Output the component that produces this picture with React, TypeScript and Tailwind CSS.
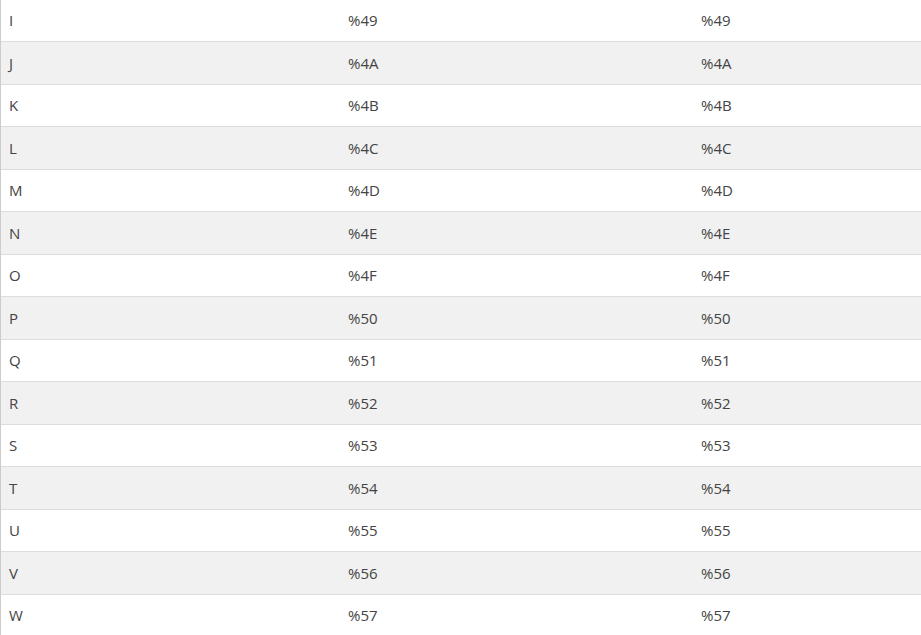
const rows: [string, string][] = [
  ['I', '%49'],
  ['J', '%4A'],
  ['K', '%4B'],
  ['L', '%4C'],
  ['M', '%4D'],
  ['N', '%4E'],
  ['O', '%4F'],
  ['P', '%50'],
  ['Q', '%51'],
  ['R', '%52'],
  ['S', '%53'],
  ['T', '%54'],
  ['U', '%55'],
  ['V', '%56'],
  ['W', '%57'],
];

export default function App() {
  return (
    <div className="w-[921px] h-[635px] overflow-hidden bg-white font-['Open_Sans',sans-serif] text-[15px] text-[#444]">
      <div className="-mt-[0.5px] border-l border-[#cccccc]">
        {rows.map(([ch, code], i) => (
          <div
            key={ch}
            className={`flex items-center h-[42.5px] border-b border-[#dddddd] ${i % 2 === 1 ? 'bg-[#f1f1f1]' : 'bg-white'}`}
          >
            <div className="w-[339px] shrink-0 pl-[8px]">{ch}</div>
            <div className="w-[353px] shrink-0 pl-[8px]">{code}</div>
            <div className="flex-1 pl-[8px]">{code}</div>
          </div>
        ))}
      </div>
    </div>
  );
}
